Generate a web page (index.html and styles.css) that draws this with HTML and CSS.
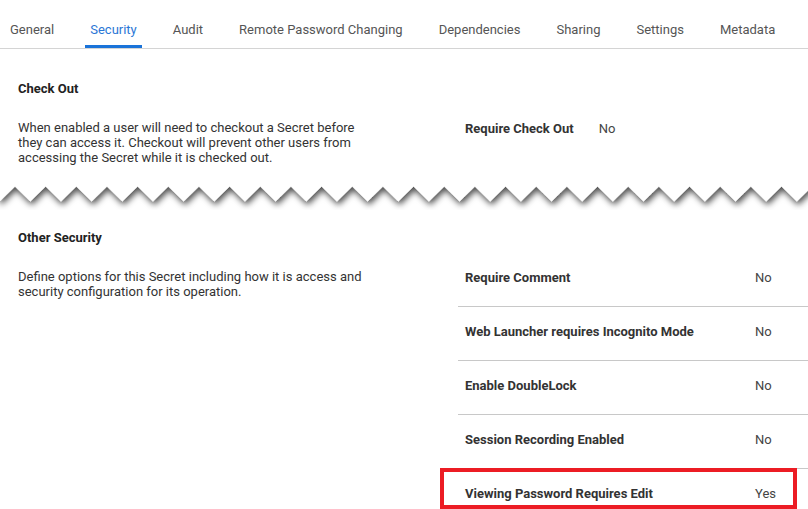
FILE: index.html
```html
<!DOCTYPE html>
<html>
<head>
<meta charset="utf-8">
<link rel="stylesheet" href="styles.css">
</head>
<body>
<nav class="tabs">
  <a class="tab">General</a>
  <a class="tab active">Security</a>
  <a class="tab">Audit</a>
  <a class="tab">Remote Password Changing</a>
  <a class="tab">Dependencies</a>
  <a class="tab">Sharing</a>
  <a class="tab">Settings</a>
  <a class="tab">Metadata</a>
</nav>

<section class="sec sec-checkout">
  <h3 class="sec-title">Check Out</h3>
  <div class="sec-body">
    <p class="desc">When enabled a user will need to checkout a Secret before they can access it. Checkout will prevent other users from accessing the Secret while it is checked out.</p>
    <div class="fields">
      <div class="inline-field"><span class="label">Require Check Out</span><span class="val">No</span></div>
    </div>
  </div>
</section>

<div class="tear">
  <svg width="808" height="30" viewBox="0 0 808 30">
    <defs>
      <filter id="sh" x="-5%" y="-50%" width="110%" height="250%">
        <feDropShadow dx="1.5" dy="3.5" stdDeviation="3.2" flood-color="#000" flood-opacity="0.7"/>
      </filter>
    </defs>
    <path filter="url(#sh)" fill="#fff" d="M-0.33,21.5 l15.33,-15 l15.33,15 l15.33,-15 l15.33,15 l15.33,-15 l15.33,15 l15.33,-15 l15.33,15 l15.33,-15 l15.33,15 l15.33,-15 l15.33,15 l15.33,-15 l15.33,15 l15.33,-15 l15.33,15 l15.33,-15 l15.33,15 l15.33,-15 l15.33,15 l15.33,-15 l15.33,15 l15.33,-15 l15.33,15 l15.33,-15 l15.33,15 l15.33,-15 l15.33,15 l15.33,-15 l15.33,15 l15.33,-15 l15.33,15 l15.33,-15 l15.33,15 l15.33,-15 l15.33,15 l15.33,-15 l15.33,15 l15.33,-15 l15.33,15 l15.33,-15 l15.33,15 l15.33,-15 l15.33,15 l15.33,-15 l15.33,15 l15.33,-15 l15.33,15 l15.33,-15 l15.33,15 l15.33,-15 l15.33,15 l15.33,-15 l15.33,15 l15.33,-15 l15.33,15 l15.33,-15 l15.33,15 l15.33,-15 l15.33,15 l15.33,-15 l15.33,15 L830,-10 L-10,-10 Z"/>
  </svg>
</div>

<section class="sec sec-other">
  <h3 class="sec-title">Other Security</h3>
  <div class="sec-body">
    <p class="desc">Define options for this Secret including how it is access and security configuration for its operation.</p>
    <div class="list">
      <div class="row"><span class="label">Require Comment</span><span class="val">No</span></div>
      <div class="row"><span class="label">Web Launcher requires Incognito Mode</span><span class="val">No</span></div>
      <div class="row"><span class="label">Enable DoubleLock</span><span class="val">No</span></div>
      <div class="row"><span class="label">Session Recording Enabled</span><span class="val">No</span></div>
      <div class="row highlight"><span class="label">Viewing Password Requires Edit</span><span class="val">Yes</span></div>
    </div>
  </div>
</section>
</body>
</html>
```
FILE: styles.css
```css
html, body {
  margin: 0;
  padding: 0;
  background: #fff;
}
body {
  font-family: Roboto, "Liberation Sans", Arial, sans-serif;
  font-size: 13px;
  color: #333;
  overflow: hidden;
  width: 808px;
  height: 509px;
}

.tabs {
  display: flex;
  gap: 26px;
  padding-left: 5px;
  height: 48px;
  border-bottom: 1px solid #d4d4d4;
}
.tab {
  box-sizing: border-box;
  height: 48px;
  padding: 21px 5px 0;
  line-height: 17px;
  color: #555;
  border-bottom: 3px solid transparent;
  white-space: nowrap;
}
.tab.active {
  color: #2b77d6;
  border-bottom-color: #1a73d9;
}

.sec-title {
  margin: 0;
  padding-left: 18px;
  font-size: 13px;
  line-height: 17px;
  font-weight: 700;
  color: #222;
}
.sec-checkout .sec-title { padding-top: 31px; }
.sec-other .sec-title { padding-top: 19px; }

.sec-body {
  display: grid;
  grid-template-columns: 458px 1fr;
}
.sec-checkout .sec-body { margin-top: 7px; }
.sec-other .sec-body { margin-top: 7px; }

.desc {
  margin: 0;
  padding: 16px 0 0 18px;
  width: 364px;
  line-height: 15px;
  color: #333;
}

.fields {
  padding: 16px 0 0 7px;
}
.inline-field {
  display: flex;
  gap: 25px;
  line-height: 17px;
}
.label {
  font-weight: 700;
  color: #333;
}
.val {
  color: #444;
}

.tear {
  height: 30px;
  margin-top: 15px;
  line-height: 0;
}
.tear svg { display: block; }

.list {
  display: flex;
  flex-direction: column;
}
.row {
  display: flex;
  align-items: flex-start;
  box-sizing: border-box;
  height: 54px;
  padding: 16px 0 0 7px;
  line-height: 17px;
  border-bottom: 1px solid #c8c8c8;
  position: relative;
}
.row .label { flex: 1; }
.row .val { width: 53px; }
.row.highlight::after {
  content: "";
  position: absolute;
  left: -18px;
  right: 11px;
  top: -1px;
  height: 41px;
  border: 4px solid #ec1c24;
  box-sizing: border-box;
}
```
